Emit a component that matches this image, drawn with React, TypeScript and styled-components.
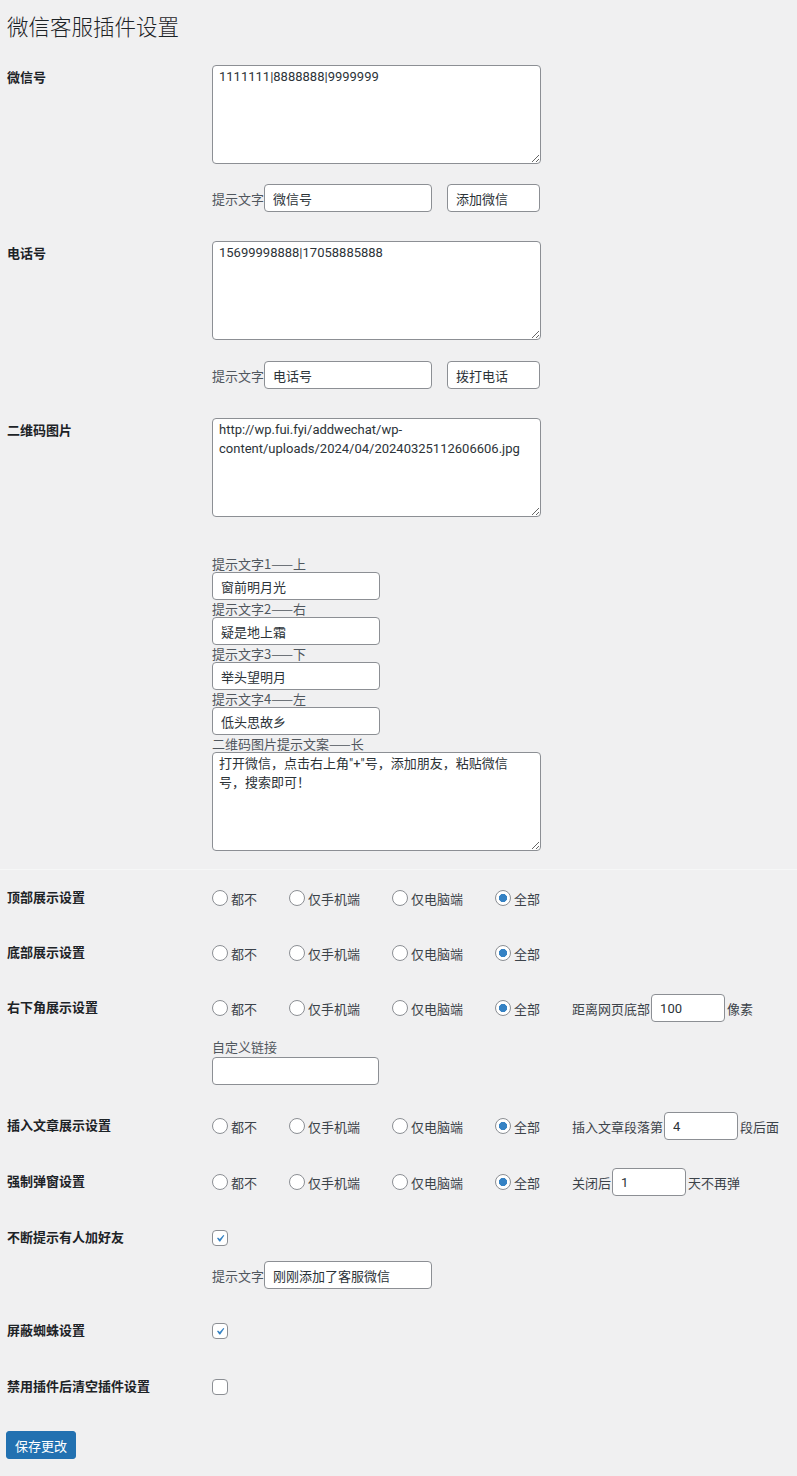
import React from 'react'
import styled, { createGlobalStyle } from 'styled-components'

const GlobalStyle = createGlobalStyle`
  body {
    margin: 0;
    background: #f0f0f1;
    color: #3c434a;
    font-family: Roboto, 'Noto Sans CJK SC', sans-serif;
    font-size: 13px;
  }
  * {
    box-sizing: border-box;
  }
`

const Page = styled.div`
  padding: 0 7px 17px;
`

const Title = styled.h1`
  margin: 14px 0 0;
  font-size: 21.5px;
  line-height: 28px;
  font-weight: 300;
  color: #1d2327;
`

const Row = styled.div<{ $pt: number; $pb: number }>`
  display: grid;
  grid-template-columns: 205px 1fr;
  align-items: start;
  padding: ${(p) => p.$pt}px 0 ${(p) => p.$pb}px;
`

const FieldLabel = styled.div<{ $line?: boolean }>`
  font-weight: 600;
  color: #1d2327;
  ${(p) =>
    p.$line
      ? 'line-height: 28px;'
      : 'line-height: 17px; padding-top: 4px;'}
`

const Field = styled.div`
  display: flex;
  flex-direction: column;
  align-items: flex-start;
`

const TextArea = styled.textarea<{ $pr?: number }>`
  width: 329px;
  height: 99px;
  margin: 0;
  padding: 2px ${(p) => p.$pr || 6}px 2px 6px;
  border: 1px solid #8c8f94;
  border-radius: 4px;
  background: #fff;
  color: #2c3338;
  font-family: Roboto, 'Noto Sans CJK SC', sans-serif;
  font-size: 13px;
  line-height: 1.42857;
  resize: vertical;
`

const TextInput = styled.input<{ $w: number }>`
  width: ${(p) => p.$w}px;
  height: 28px;
  margin: 0;
  padding: 0 8px;
  border: 1px solid #8c8f94;
  border-radius: 4px;
  background: #fff;
  color: #2c3338;
  font-family: Roboto, 'Noto Sans CJK SC', sans-serif;
  font-size: 13px;
`

const Line = styled.div<{ $mt?: number }>`
  display: flex;
  align-items: center;
  min-height: 28px;
  margin-top: ${(p) => p.$mt || 0}px;
`

const Hint = styled.span`
  color: #50575e;
  font-family: 'Noto Sans CJK SC', sans-serif;
  line-height: 17px;
  white-space: nowrap;
`

const Stack = styled.div<{ $mt?: number }>`
  display: flex;
  flex-direction: column;
  align-items: flex-start;
  margin-top: ${(p) => p.$mt || 0}px;
`

const Divider = styled.div`
  border-top: 1px solid #f6f7f7;
  margin: 0 -7px;
`

const Options = styled.div`
  display: flex;
  align-items: center;
  gap: 32px;
  min-height: 28px;
`

const Option = styled.label`
  display: inline-flex;
  align-items: center;
  gap: 3px;
  white-space: nowrap;
  color: #3c434a;
`

const Radio = styled.input.attrs({ type: 'radio' })`
  appearance: none;
  width: 16px;
  height: 16px;
  margin: 0;
  border: 1px solid #8c8f94;
  border-radius: 50%;
  background: #fff;
  &:checked {
    background: radial-gradient(circle, #3582c4 0 3.8px, #fff 4.4px);
  }
`

const Extra = styled.div`
  display: flex;
  align-items: center;
  white-space: nowrap;
  & > input {
    margin: 0 2px 0 1px;
  }
`

const CheckBox = styled.span`
  display: inline-flex;
  align-items: center;
  justify-content: center;
  width: 16px;
  height: 16px;
  border: 1px solid #8c8f94;
  border-radius: 4px;
  background: #fff;
`

const CheckLine = styled.div`
  display: flex;
  align-items: center;
  height: 28px;
`

const SecondInput = styled(TextInput)`
  margin-left: 15px;
`

const LinkInput = styled(TextInput)`
  margin-top: 2px;
`

const SaveButton = styled.button`
  margin: 16px 0 0 -1px;
  height: 28px;
  padding: 0 8px;
  border: 1px solid #2271b1;
  border-radius: 3px;
  background: #2271b1;
  color: #fff;
  font-family: Roboto, 'Noto Sans CJK SC', sans-serif;
  font-size: 13px;
`

const choices = ['都不', '仅手机端', '仅电脑端', '全部']

const RadioSet = ({ name, extra }: { name: string; extra?: React.ReactNode }) => (
  <Options>
    {choices.map((c, i) => (
      <Option key={c}>
        <Radio name={name} defaultChecked={i === 3} />
        {c}
      </Option>
    ))}
    {extra && <Extra>{extra}</Extra>}
  </Options>
)

const Check = ({ checked }: { checked?: boolean }) => (
  <CheckLine>
    <CheckBox>
      {checked && (
        <svg width="19" height="19" viewBox="0 0 20 20">
          <path
            d="M14.83 4.89l1.34.94-5.81 8.38H9.02L5.78 9.67l1.34-1.25 2.57 2.4z"
            fill="#3582c4"
          />
        </svg>
      )}
    </CheckBox>
  </CheckLine>
)

const App = () => {
  return (
    <Page>
      <GlobalStyle />
      <Title>微信客服插件设置</Title>

      <Row $pt={23} $pb={7}>
        <FieldLabel>微信号</FieldLabel>
        <Field>
          <TextArea defaultValue="1111111|8888888|9999999" />
          <Line $mt={20}>
            <Hint>提示文字</Hint>
            <TextInput $w={168} defaultValue="微信号" />
            <SecondInput $w={93} defaultValue="添加微信" />
          </Line>
        </Field>
      </Row>

      <Row $pt={22} $pb={7}>
        <FieldLabel>电话号</FieldLabel>
        <Field>
          <TextArea defaultValue="15699998888|17058885888" />
          <Line $mt={21}>
            <Hint>提示文字</Hint>
            <TextInput $w={168} defaultValue="电话号" />
            <SecondInput $w={93} defaultValue="拨打电话" />
          </Line>
        </Field>
      </Row>

      <Row $pt={22} $pb={18}>
        <FieldLabel>二维码图片</FieldLabel>
        <Field>
          <TextArea defaultValue="http://wp.fui.fyi/addwechat/wp-content/uploads/2024/04/20240325112606606.jpg" />
          <Stack $mt={38}>
            <Hint>提示文字1——上</Hint>
            <TextInput $w={168} defaultValue="窗前明月光" />
            <Hint>提示文字2——右</Hint>
            <TextInput $w={168} defaultValue="疑是地上霜" />
            <Hint>提示文字3——下</Hint>
            <TextInput $w={168} defaultValue="举头望明月" />
            <Hint>提示文字4——左</Hint>
            <TextInput $w={168} defaultValue="低头思故乡" />
            <Hint>二维码图片提示文案——长</Hint>
            <TextArea
              $pr={18}
              defaultValue={'打开微信，点击右上角"+"号，添加朋友，粘贴微信号，搜索即可！'}
            />
          </Stack>
        </Field>
      </Row>

      <Divider />

      <Row $pt={14} $pb={13}>
        <FieldLabel $line>顶部展示设置</FieldLabel>
        <RadioSet name="top" />
      </Row>

      <Row $pt={14} $pb={13}>
        <FieldLabel $line>底部展示设置</FieldLabel>
        <RadioSet name="bottom" />
      </Row>

      <Row $pt={14} $pb={13}>
        <FieldLabel $line>右下角展示设置</FieldLabel>
        <Field>
          <RadioSet
            name="corner"
            extra={
              <>
                距离网页底部
                <TextInput $w={74} defaultValue="100" />
                像素
              </>
            }
          />
          <Stack $mt={16}>
            <Hint>自定义链接</Hint>
            <LinkInput $w={167} defaultValue="" />
          </Stack>
        </Field>
      </Row>

      <Row $pt={14} $pb={14}>
        <FieldLabel $line>插入文章展示设置</FieldLabel>
        <RadioSet
          name="article"
          extra={
            <>
              插入文章段落第
              <TextInput $w={74} defaultValue="4" />
              段后面
            </>
          }
        />
      </Row>

      <Row $pt={14} $pb={14}>
        <FieldLabel $line>强制弹窗设置</FieldLabel>
        <RadioSet
          name="popup"
          extra={
            <>
              关闭后
              <TextInput $w={74} defaultValue="1" />
              天不再弹
            </>
          }
        />
      </Row>

      <Row $pt={14} $pb={14}>
        <FieldLabel $line>不断提示有人加好友</FieldLabel>
        <Field>
          <Check checked />
          <Line $mt={9}>
            <Hint>提示文字</Hint>
            <TextInput $w={168} defaultValue="刚刚添加了客服微信" />
          </Line>
        </Field>
      </Row>

      <Row $pt={14} $pb={14}>
        <FieldLabel $line>屏蔽蜘蛛设置</FieldLabel>
        <Check checked />
      </Row>

      <Row $pt={14} $pb={14}>
        <FieldLabel $line>禁用插件后清空插件设置</FieldLabel>
        <Check />
      </Row>

      <SaveButton>保存更改</SaveButton>
    </Page>
  )
}

export default App
